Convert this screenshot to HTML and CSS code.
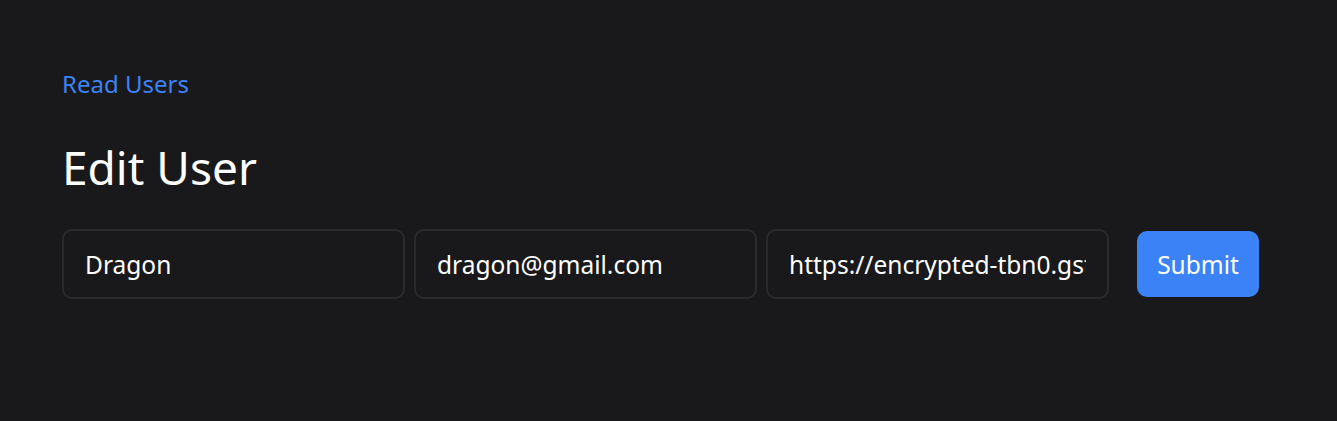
FILE: index.html
```html
<!DOCTYPE html>
<html>
<head>
<meta charset="utf-8">
<link rel="stylesheet" href="styles.css">
</head>
<body>
<main class="page">
  <a class="back" href="#">Read Users</a>
  <h1 class="title">Edit User</h1>
  <form class="form">
    <input class="field" type="text" value="Dragon">
    <input class="field" type="text" value="dragon@gmail.com">
    <input class="field" type="text" value="https://encrypted-tbn0.gstatic.com/images?q=tbn">
    <button class="submit" type="button">Submit</button>
  </form>
</main>
</body>
</html>
```

FILE: styles.css
```css
html, body {
  margin: 0;
  background: #19191b;
  height: 100%;
}
body {
  font-family: "Noto Sans", "Open Sans", sans-serif;
  color: #ffffff;
}
.page {
  padding: 67px 62px 0 62px;
  display: flex;
  flex-direction: column;
  align-items: flex-start;
}
.back {
  color: #3b82f6;
  text-decoration: none;
  font-size: 24px;
  line-height: 34px;
}
.title {
  margin: 36px 0 0 0;
  font-size: 46px;
  font-weight: 400;
  line-height: 60px;
}
.form {
  margin-top: 32px;
  display: flex;
  align-items: center;
}
.field {
  box-sizing: border-box;
  width: 343px;
  height: 70px;
  margin: 0 9px 0 0;
  padding: 0 21px;
  background: #19191b;
  border: 2px solid #2b2b2e;
  border-radius: 10px;
  color: #ffffff;
  font-family: inherit;
  font-size: 24.5px;
  outline: none;
}
.field:last-of-type {
  margin-right: 28px;
}
.submit {
  box-sizing: border-box;
  width: 122px;
  height: 66px;
  padding: 0;
  background: #3b82f6;
  color: #ffffff;
  border: none;
  border-radius: 10px;
  font-family: inherit;
  font-size: 24.5px;
}
```
